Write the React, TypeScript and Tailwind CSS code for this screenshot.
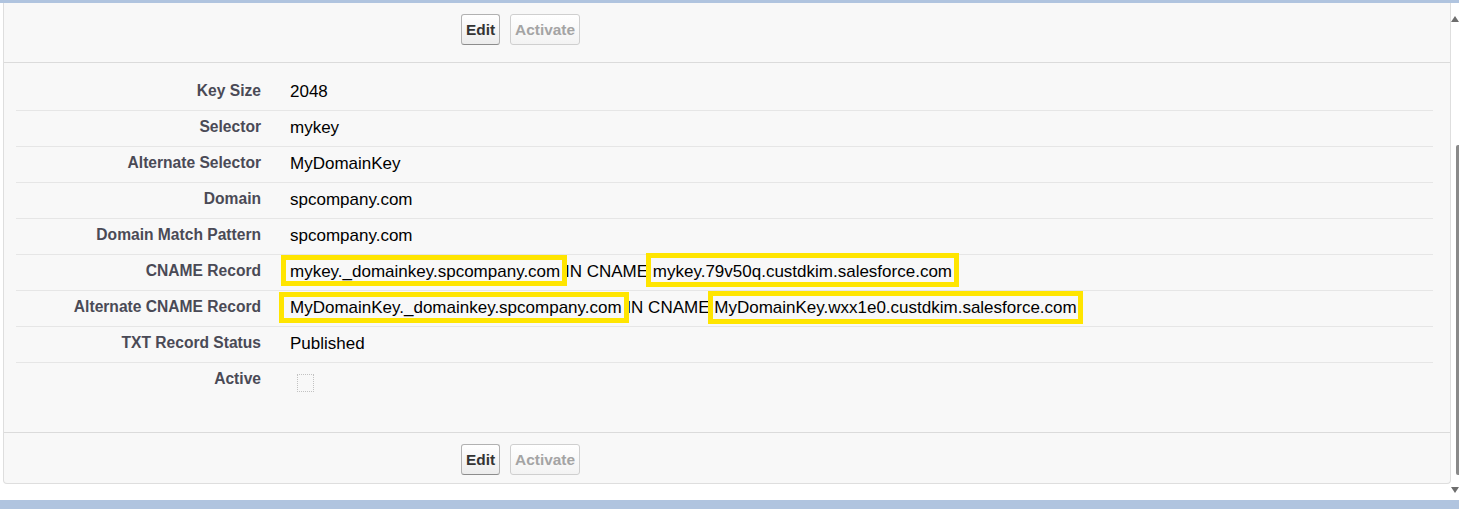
import React from "react";

/* Detail rows of the DKIM key page */

type Row = { label: string; value: React.ReactNode };

function Mark({
  children,
  box,
}: {
  children: React.ReactNode;
  box: string;
}) {
  return (
    <span className="relative inline-block">
      {children}
      <span className={`pointer-events-none absolute border-[5px] border-[#ffe500] ${box}`} />
    </span>
  );
}

function Btn({ label, disabled }: { label: string; disabled?: boolean }) {
  return (
    <button
      className={
        disabled
          ? "h-[31px] px-[4px] rounded-[3px] border border-[#cfcfcf] bg-gradient-to-b from-white to-[#f3f3f3] text-[15.4px] leading-[19px] font-bold text-[#a4a4a4]"
          : "h-[31px] px-[4px] rounded-[3px] border border-[#b1b1b1] border-b-[#8c8c8c] bg-gradient-to-b from-white to-[#ececec] text-[15.4px] leading-[19px] font-bold text-[#333]"
      }
    >
      {label}
    </button>
  );
}

function ButtonBar({ className }: { className: string }) {
  return (
    <div className={`flex gap-[10px] pl-[457px] pt-[11px] ${className}`}>
      <Btn label="Edit" />
      <Btn label="Activate" disabled />
    </div>
  );
}

const rows: Row[] = [
  { label: "Key Size", value: "2048" },
  { label: "Selector", value: "mykey" },
  { label: "Alternate Selector", value: "MyDomainKey" },
  { label: "Domain", value: "spcompany.com" },
  { label: "Domain Match Pattern", value: "spcompany.com" },
  {
    label: "CNAME Record",
    value: (
      <>
        <Mark box="-left-[9px] -right-[7px] -top-[7px] -bottom-[5px]">
          mykey._domainkey.spcompany.com
        </Mark>{" "}
        IN CNAME{" "}
        <Mark box="-left-[7px] -right-[7px] -top-[9px] -bottom-[6px]">
          mykey.79v50q.custdkim.salesforce.com
        </Mark>
      </>
    ),
  },
  {
    label: "Alternate CNAME Record",
    value: (
      <>
        <Mark box="-left-[11px] -right-[7px] -top-[6px] -bottom-[6px]">
          MyDomainKey._domainkey.spcompany.com
        </Mark>{" "}
        IN CNAME{" "}
        <Mark box="-left-[6px] -right-[6px] -top-[7px] -bottom-[7px]">
          MyDomainKey.wxx1e0.custdkim.salesforce.com
        </Mark>
      </>
    ),
  },
  { label: "TXT Record Status", value: "Published" },
  {
    label: "Active",
    value: (
      <span className="ml-[7px] mt-[4px] block w-[17px] h-[18px] border border-dotted border-[#c2c2c2]" />
    ),
  },
];

export default function App() {
  return (
    <div
      className="w-[1459px] h-[509px] flex flex-col overflow-hidden bg-white"
      style={{ fontFamily: '"Liberation Sans", Arial, sans-serif' }}
    >
      <div className="h-[3px] bg-[#b0c4df]" />

      <div className="flex flex-1 min-h-0">
        <div className="flex-1 pl-[3px] flex flex-col">
          {/* panel */}
          <div className="bg-[#f8f8f8] border-l border-r border-b border-[#dedede] rounded-b-[4px]">
            <ButtonBar className="h-[60px] border-b border-[#dbdbdb]" />

            <div className="pl-[12px] pr-[17px] pt-[12px] pb-[34px]">
              {rows.map((r, i) => (
                <div
                  key={r.label}
                  className={
                    i < rows.length - 1
                      ? "flex h-[36px] border-b border-[#e6e6e6]"
                      : "flex h-[35px]"
                  }
                >
                  <div className="w-[252px] shrink-0 pr-[7px] pt-[6px] text-right text-[15.6px] leading-[19px] font-bold text-[#4a4a56]">
                    {r.label}
                  </div>
                  <div className="pl-[22px] pt-[7px] text-[17px] leading-[19px] text-black whitespace-nowrap">
                    {r.value}
                  </div>
                </div>
              ))}
            </div>

            <ButtonBar className="h-[51px] border-t border-[#dbdbdb]" />
          </div>
        </div>

        {/* scrollbar */}
        <div className="w-[8px] flex flex-col items-end bg-white">
          <svg width="8" height="8" viewBox="0 0 8 8" className="mt-[12px] shrink-0">
            <polygon points="0,7 4,1 8,7" fill="#6e6e6e" />
          </svg>
          <div className="mt-[122px] w-[3px] h-[330px] rounded-l-[2px] bg-[#8a8a8a]" />
          <svg width="8" height="8" viewBox="0 0 8 8" className="mt-[11px] shrink-0">
            <polygon points="0,1 8,1 4,7" fill="#6e6e6e" />
          </svg>
        </div>
      </div>

      <div className="h-[9px] bg-[#b0c4df]" />
    </div>
  );
}
